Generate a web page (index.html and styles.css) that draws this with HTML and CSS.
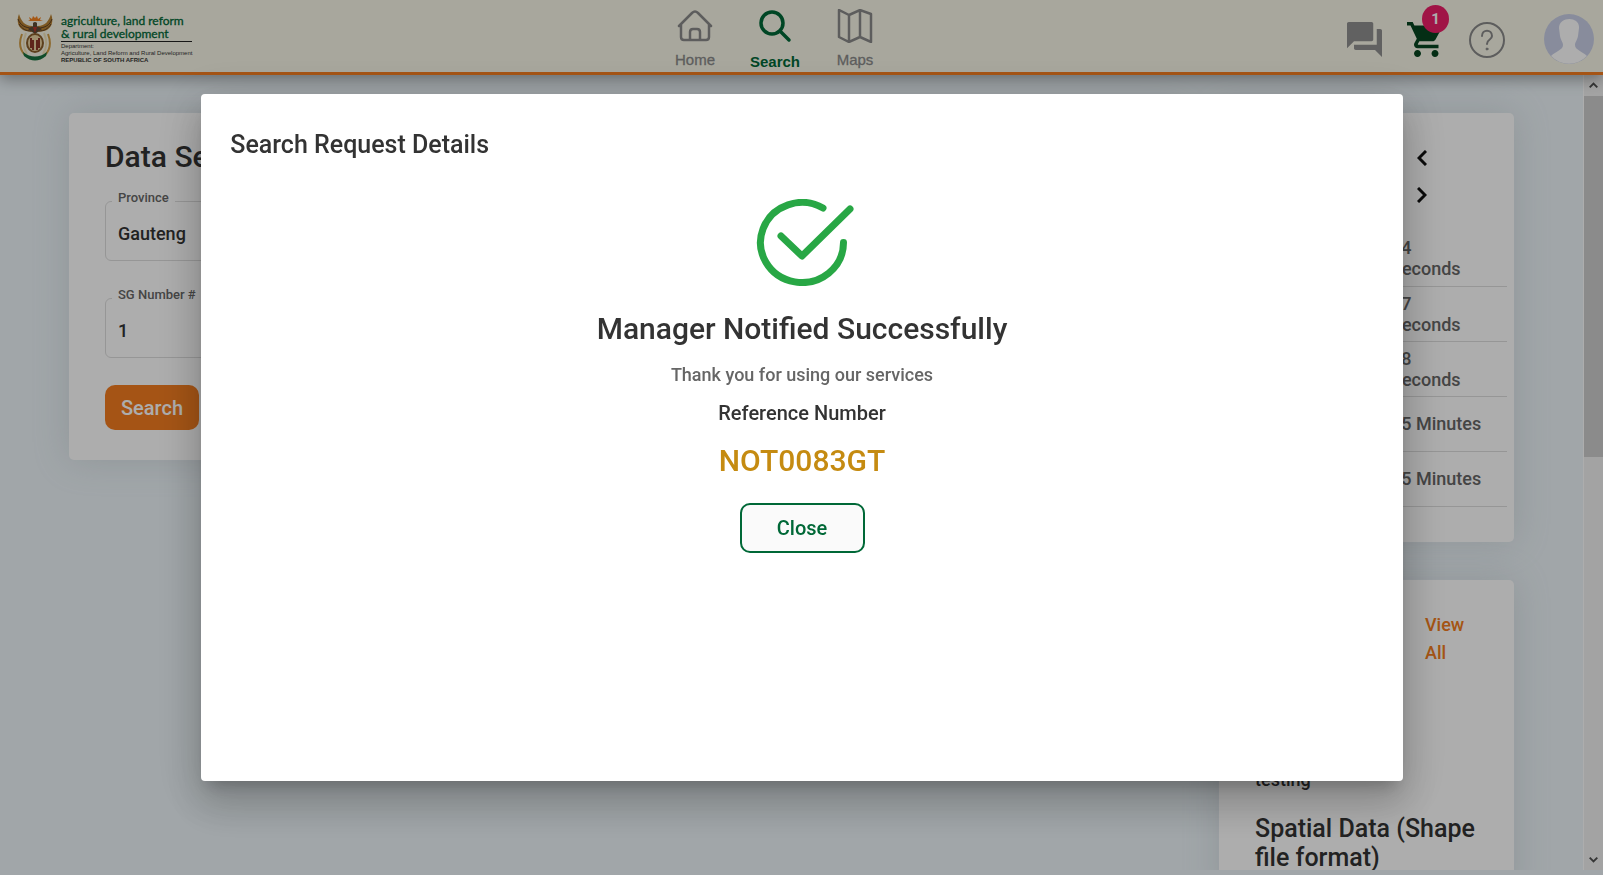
FILE: index.html
```html
<!DOCTYPE html>
<html lang="en">
<head>
<meta charset="utf-8">
<meta name="viewport" content="width=device-width, initial-scale=1">
<title>Data Search</title>
<link rel="stylesheet" href="styles.css">
</head>
<body class="app">
<header class="topbar">
  <a class="brand" href="#">
    <svg class="crest" viewBox="0 0 36 48" aria-hidden="true">
      <path d="M2 0C-1 7 1 15 9 17L15 18V12C8 12 4 7 2 0Z" fill="#b98233"/>
      <path d="M34 0C37 7 35 15 27 17L21 18V12C28 12 32 7 34 0Z" fill="#b98233"/>
      <path d="M1 5C3 11 8 14 15 14M2 10C5 15 9 17 14 17M35 5C33 11 28 14 21 14M34 10C31 15 27 17 22 17" stroke="#5e4126" fill="none"/>
      <path d="M11 7L13 6L12 3L15 5L16 2L18 4L20 2L21 5L24 3L23 6L26 7Z" fill="#f58220"/>
      <path d="M16 9Q18 7 20 9L20 12L25 15L18 20L11 15L16 12Z" fill="#5e4a35"/>
      <path d="M16 13L18 19L20 13Z" fill="#b5362b"/>
      <path d="M5 20Q0 33 8 41M31 20Q36 33 28 41" fill="none" stroke="#d09c45" stroke-width="2"/>
      <path d="M9 19Q4 31 10 40M27 19Q32 31 26 40" fill="none" stroke="#f1e2b8" stroke-width="2"/>
      <ellipse cx="18" cy="29" rx="8" ry="9" fill="#ead3a2" stroke="#8a5f2c" stroke-width="2"/>
      <path d="M14 24V34M16 26V36M20 26V36M22 24V34" stroke="#8c3529" stroke-width="2"/>
      <path d="M6 38Q18 47 30 38L29 42Q18 51 7 42Z" fill="#17703f"/>
    </svg>
    <span class="brand-text">
      <span class="brand-name">agriculture, land reform<br>&amp; rural development</span>
      <span class="brand-dept">Department:<br>Agriculture, Land Reform and Rural Development<br><b>REPUBLIC OF SOUTH AFRICA</b></span>
    </span>
  </a>
  <nav class="nav" aria-label="Main">
    <a class="nav-item" href="#">
      <svg class="nav-icon" viewBox="0 0 36 34" fill="none" stroke="currentColor" stroke-width="2.500" stroke-linecap="round" stroke-linejoin="round" aria-hidden="true"><path d="M2 17L15 4Q18 1 21 4L34 17M4 16V28Q4 31 7 31H29Q32 31 32 28V16M13 31V23Q13 20 16 20H20Q23 20 23 23V31"/></svg>
      Home
    </a>
    <a class="nav-item nav-active" href="#">
      <svg class="nav-icon" viewBox="0 0 36 34" fill="none" stroke="currentColor" stroke-width="3.500" stroke-linecap="round" aria-hidden="true"><circle cx="15" cy="14" r="11"/><path d="M23 22L32 31"/></svg>
      Search
    </a>
    <a class="nav-item" href="#">
      <svg class="nav-icon" viewBox="0 0 36 34" fill="none" stroke="currentColor" stroke-width="2.500" stroke-linejoin="round" aria-hidden="true"><path d="M2 1L12 6L23 1L34 5V33L23 28L12 33L2 28ZM12 6V33M23 1V28"/></svg>
      Maps
    </a>
  </nav>
  <div class="tools">
    <button class="tool" type="button" aria-label="Messages">
      <svg width="35" height="35" viewBox="2 2 20 20" fill="#8f8f8f" aria-hidden="true"><path d="M21 6h-2v9H6v2c0 .55.45 1 1 1h11l4 4V7c0-.55-.45-1-1-1zm-4 6V3c0-.55-.45-1-1-1H3c-.55 0-1 .45-1 1v14l4-4h10c.55 0 1-.45 1-1z"/></svg>
    </button>
    <button class="tool cart" type="button" aria-label="Cart">
      <svg width="35" height="35" viewBox="1 2 20 20" fill="#06451f" aria-hidden="true"><path d="M7 18c-1.100 0-1.990.9-1.990 2S5.900 22 7 22s2-.9 2-2-.9-2-2-2zM1 2v2h2l3.600 7.590-1.350 2.450c-.16.28-.25.61-.25.960 0 1.100.9 2 2 2h12v-2H7.420c-.14 0-.25-.11-.25-.25l.03-.12.9-1.630h7.450c.75 0 1.410-.41 1.750-1.030l3.580-6.490c.08-.14.12-.31.12-.48 0-.55-.45-1-1-1H5.210l-.94-2H1zm16 16c-1.100 0-1.990.9-1.990 2s.89 2 1.990 2 2-.9 2-2-.9-2-2-2z"/></svg>
      <span class="badge">1</span>
    </button>
    <button class="tool" type="button" aria-label="Help">
      <svg width="36" height="36" viewBox="0 0 36 36" fill="none" stroke="#8a8a8a" stroke-width="2" stroke-linecap="round" aria-hidden="true"><circle cx="18" cy="18" r="17"/><path d="M13 14C13 7 23 7 23 14C23 18 18 17 18 22"/><circle cx="18" cy="27" r="1" fill="#8a8a8a" stroke-width="1"/></svg>
    </button>
    <button class="tool avatar" type="button" aria-label="Account">
      <svg width="50" height="50" viewBox="0 0 50 50" aria-hidden="true"><circle cx="25" cy="25" r="25" fill="#c9cfe6"/><path d="M15 14C15 2 36 2 35 14L34 22C33 27 31 28 31 31C31 36 38 37 43 42A25 25 0 0 1 7 42C12 37 19 36 19 31C19 28 17 27 16 22Z" fill="#fff"/></svg>
    </button>
  </div>
</header>

<div class="viewport">
  <main class="page">
    <section class="card search-card">
      <h1 class="page-title">Data Search</h1>
      <form class="form">
        <fieldset class="field">
          <legend class="field-legend"><label for="province">Province</label></legend>
          <select class="control" id="province"><option>Gauteng</option></select>
        </fieldset>
        <fieldset class="field">
          <legend class="field-legend"><label for="sg">SG Number #</label></legend>
          <input class="control" id="sg" type="text" value="1">
        </fieldset>
        <button class="submit" type="button">Search</button>
      </form>
    </section>
    <div class="side">
      <section class="card times">
        <div class="pager">
          <button class="page-btn" type="button" aria-label="Previous"><svg width="10" height="16" viewBox="0 0 10 16" fill="none" stroke="#111" stroke-width="3" aria-hidden="true"><path d="M9 1L2 8L9 15"/></svg></button>
          <button class="page-btn" type="button" aria-label="Next"><svg width="10" height="16" viewBox="0 0 10 16" fill="none" stroke="#111" stroke-width="3" aria-hidden="true"><path d="M1 1L8 8L1 15"/></svg></button>
        </div>
        <table class="times-table">
          <tr><td></td><td class="time">14<br>Seconds</td></tr>
          <tr><td></td><td class="time">17<br>Seconds</td></tr>
          <tr><td></td><td class="time">18<br>Seconds</td></tr>
          <tr><td></td><td class="time">15 Minutes</td></tr>
          <tr><td></td><td class="time">15 Minutes</td></tr>
        </table>
      </section>
      <section class="card notices">
        <div class="notices-head"><a class="view-all" href="#">View All</a></div>
        <p class="notice-text">testing</p>
        <h2 class="notice-title">Spatial Data (Shape file format)</h2>
      </section>
    </div>
  </main>
  <div class="scrollbar" aria-hidden="true">
    <svg class="arrow" viewBox="0 0 20 20"><path d="M6 12L10 8L14 12" fill="none" stroke="#505050" stroke-width="2"/></svg>
    <div class="track"><div class="thumb"></div></div>
    <svg class="arrow" viewBox="0 0 20 20"><path d="M6 8L10 12L14 8" fill="none" stroke="#505050" stroke-width="2"/></svg>
  </div>
</div>

<div class="backdrop">
  <div class="dialog" role="dialog" aria-modal="true" aria-labelledby="dialog-title">
    <h2 class="dialog-title" id="dialog-title">Search Request Details</h2>
    <div class="result">
      <svg class="success" viewBox="0 0 103 87" fill="none" stroke="#28a745" stroke-width="7" stroke-linecap="round" stroke-linejoin="round" aria-hidden="true"><path d="M72 9A41.500 40 0 1 0 92.500 43.500M30 37L51 57L99 10"/></svg>
      <h3 class="headline">Manager Notified Successfully</h3>
      <p class="thanks">Thank you for using our services</p>
      <p class="ref-label">Reference Number</p>
      <p class="ref">NOT0083GT</p>
      <button class="close" type="button">Close</button>
    </div>
  </div>
</div>
</body>
</html>
```
FILE: styles.css
```css
* { box-sizing: border-box; }
h1, h2, h3, p { margin: 0; font-weight: 500; }
button, input, select { font: inherit; }
button { border: 0; background: none; padding: 0; }
a { text-decoration: none; }
svg { display: block; }

.app {
  margin: 0;
  height: 100vh;
  display: flex;
  flex-direction: column;
  overflow: hidden;
  background: #edf5f9;
  color: #333;
  font-family: Roboto, sans-serif;
  font-weight: 500;
  font-size: 18px;
}

.topbar {
  position: relative;
  z-index: 1;
  flex: none;
  height: 75px;
  padding: 0 9px 0 17px;
  display: flex;
  justify-content: space-between;
  background: #f8f7e8;
  border-bottom: 3px solid #f37d20;
  box-shadow: 0 4px 14px rgba(0, 0, 0, .35);
}
.brand { display: flex; gap: 8px; padding-top: 14px; min-width: 186px; }
.crest { width: 36px; height: 48px; }
.brand-text { display: flex; flex-direction: column; }
.brand-name {
  color: #006837;
  font: 400 12px/13px Lato, sans-serif;
  border-bottom: 1px solid #222;
  padding-bottom: 1px;
  -webkit-text-stroke: 0.3px #006837;
}
.brand-dept { color: #333; font: 400 6px/7px "Liberation Sans", sans-serif; padding-top: 1px; }
.nav { display: flex; gap: 30px; padding-top: 9px; }
.nav-item {
  width: 50px;
  display: flex;
  flex-direction: column;
  align-items: center;
  gap: 9px;
  color: #8a8a8a;
  font: 400 15px/16px "Liberation Sans", sans-serif;
  -webkit-text-stroke: 0.3px currentColor;
}
.nav-icon { width: 36px; height: 34px; flex: none; }
.nav-active { color: #006837; font-weight: 700; gap: 11px; -webkit-text-stroke: 0; }
.tools { display: flex; align-items: flex-start; padding-top: 14px; }
.tool { padding-top: 8px; margin-right: 25px; }
.cart { position: relative; margin-right: 27px; }
.badge {
  position: absolute;
  top: -9px;
  left: 15px;
  width: 27px;
  height: 28px;
  border-radius: 50%;
  background: #ec1e68;
  color: #fff;
  font: 700 15px/28px Roboto, sans-serif;
  text-align: center;
}
.tool + .avatar { padding: 0; margin: 0 0 0 14px; }

.viewport { flex: 1; min-height: 0; display: flex; margin-bottom: 5px; overflow: hidden; }
.page {
  flex: 1;
  padding: 38px 69px;
  display: grid;
  grid-template-columns: 1fr 295px;
  gap: 38px;
  align-items: start;
}
.card { background: #fff; border-radius: 5px; box-shadow: 0 0 35px rgba(154, 161, 171, .3); }
.search-card { padding: 26px 36px 30px; }
.page-title { font-size: 30px; line-height: 36px; }
.form { display: flex; flex-direction: column; align-items: stretch; margin-top: 14px; }
.field {
  margin: 0 0 25px;
  min-width: 0;
  height: 72px;
  padding: 0 12px 0 6px;
  border: 1px solid #ddd;
  border-radius: 6px;
}
.field-legend { padding: 0 6px 6px; font-size: 13px; line-height: 18px; color: #666; height: 24px; }
.control {
  display: block;
  width: 100%;
  height: 40px;
  border: 0;
  padding: 0 6px;
  background: none;
  color: #333;
  appearance: none;
  outline: 0;
}
.submit {
  align-self: flex-start;
  margin-top: 2px;
  padding: 0 16px;
  height: 45px;
  border-radius: 10px;
  background: #f37d20;
  color: #fff;
  font-size: 20px;
}
.side { display: flex; flex-direction: column; gap: 38px; }
.times { padding: 26px 7px 35px; }
.pager { display: flex; flex-direction: column; align-items: flex-end; padding-right: 67px; margin-bottom: 18px; }
.page-btn { width: 36px; height: 37px; display: grid; place-items: center; }
.times-table { width: 100%; border-collapse: collapse; color: #666; line-height: 21px; }
.times-table td { height: 55px; padding: 0; border-bottom: 1px solid #ddd; }
.time { width: 116px; }
.notices { padding: 31px 36px; }
.notices-head { display: flex; justify-content: flex-end; }
.view-all { width: 53px; line-height: 28px; color: #f37d20; }
.notice-text { margin-top: 102px; line-height: 22px; }
.notice-title { margin-top: 23px; font-size: 25px; line-height: 29px; }

.scrollbar {
  width: 20px;
  display: flex;
  flex-direction: column;
  background: #f1f1f1;
  border-left: 1px solid #fff;
}
.arrow { flex: none; width: 19px; height: 21px; }
.track { flex: 1; }
.thumb { height: 48%; background: #cdcdcd; }

.backdrop {
  position: fixed;
  inset: 0;
  z-index: 2;
  display: grid;
  place-items: center;
  padding-left: 1px;
  background: rgba(0, 0, 0, .32);
}
.dialog {
  width: 75%;
  min-height: 687px;
  padding: 31px 29px 30px;
  border-radius: 4px;
  background: #fff;
  box-shadow: 0 11px 15px -7px rgba(0, 0, 0, .2), 0 24px 38px 3px rgba(0, 0, 0, .14), 0 9px 46px 8px rgba(0, 0, 0, .12);
}
.dialog-title { font-size: 25px; line-height: 40px; }
.result { display: flex; flex-direction: column; align-items: center; padding-top: 34px; }
.success { width: 103px; height: 87px; }
.headline { margin-top: 25px; font-size: 30px; line-height: 36px; }
.thanks { margin-top: 17px; line-height: 22px; color: #666; }
.ref-label { margin-top: 15px; font-size: 20px; line-height: 24px; }
.ref { margin-top: 18px; font-size: 30px; line-height: 36px; color: #c58b11; }
.close {
  margin-top: 24px;
  width: 125px;
  height: 50px;
  border: 2px solid #006837;
  border-radius: 10px;
  background: #fafafa;
  color: #006837;
  font-size: 20px;
}
```
